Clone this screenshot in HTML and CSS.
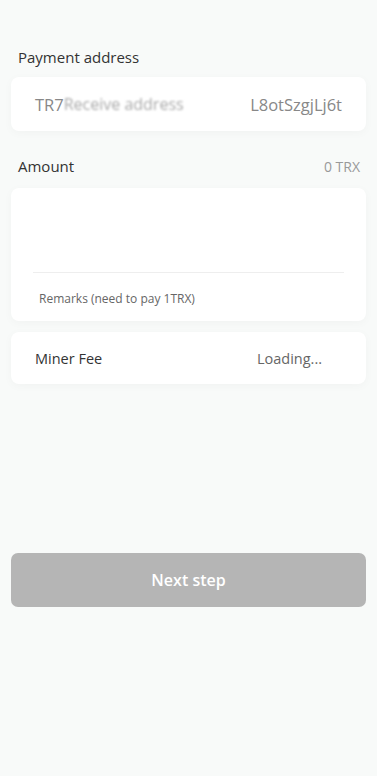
FILE: index.html
```html
<!DOCTYPE html>
<html lang="en">
<head>
  <meta charset="UTF-8">
  <meta name="viewport" content="width=device-width, initial-scale=1.0">
  <title>Transfer</title>
  <link rel="stylesheet" href="styles.css">
</head>
<body>
  <div class="page">
    <!-- Payment address -->
    <div class="label-row">
      <span class="label">Payment address</span>
    </div>
    <div class="card address-card">
      <span class="addr">TR7</span>
      <span class="addr-blur">Receive address</span>
      <span class="addr">L8otSzgjLj6t</span>
    </div>

    <!-- Amount -->
    <div class="label-row amount-row">
      <span class="label">Amount</span>
      <span class="balance">0 TRX</span>
    </div>
    <div class="card amount-card">
      <div class="amount-input"></div>
      <div class="remarks">Remarks (need to pay 1TRX)</div>
    </div>

    <!-- Miner fee -->
    <div class="card fee-card">
      <span class="fee-label">Miner Fee</span>
      <span class="fee-value">Loading...</span>
    </div>

    <button class="next-btn" disabled>Next step</button>
  </div>
</body>
</html>
```

FILE: styles.css
```css
body {
  margin: 0;
  padding: 0;
  background-color: #f8faf9;
  font-family: "Open Sans", "Noto Sans", sans-serif;
  color: #333;
}

.page {
  padding: 44px 11px 0 11px;
}

.label-row {
  display: flex;
  justify-content: space-between;
  align-items: center;
  padding: 0 6px 0 7px;
  height: 26px;
}

.label {
  font-size: 15px;
  color: #333;
}

.balance {
  font-size: 14px;
  color: #999;
}

.amount-row {
  margin-top: 22px;
}

.card {
  background-color: #fff;
  border-radius: 8px;
  box-shadow: 0 2px 10px rgba(0, 0, 0, 0.03);
}

.address-card {
  margin-top: 7px;
  height: 54px;
  display: flex;
  align-items: center;
  padding: 0 24px;
  font-size: 16.5px;
}

.addr {
  color: #888;
}

.addr-blur {
  flex: 1;
  color: #aaa;
  filter: blur(1.2px);
  font-size: 16px;
  padding-right: 30px;
  overflow: hidden;
  white-space: nowrap;
}

.amount-card {
  margin-top: 9px;
  height: 133px;
  padding: 0 22px;
  display: flex;
  flex-direction: column;
}

.amount-input {
  height: 84px;
  border-bottom: 1px solid #eee;
}

.remarks {
  font-size: 12px;
  color: #666;
  padding: 17px 0 0 6px;
}

.fee-card {
  margin-top: 11px;
  height: 52px;
  display: flex;
  justify-content: space-between;
  align-items: center;
  padding: 0 44px 0 24px;
  font-size: 14.5px;
}

.fee-label {
  color: #333;
}

.fee-value {
  color: #666;
}

.next-btn {
  display: block;
  width: 100%;
  height: 54px;
  margin-top: 169px;
  border: none;
  border-radius: 7px;
  background-color: #b5b5b5;
  color: #fff;
  font-family: "Open Sans", "Noto Sans", sans-serif;
  font-size: 16px;
  font-weight: 600;
}
```
